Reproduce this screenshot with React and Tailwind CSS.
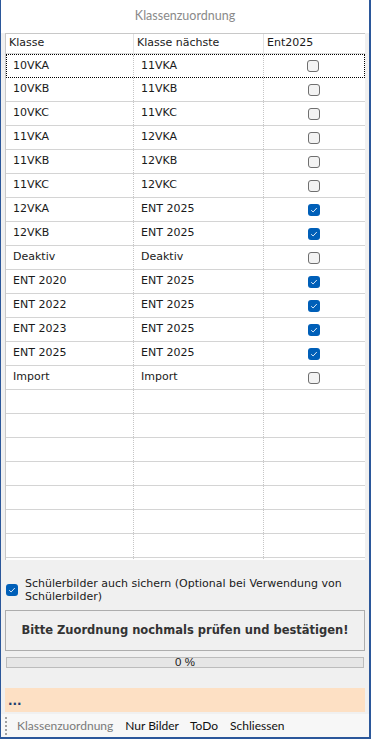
import React from "react";

const rows = [
  ["10VKA", "11VKA", false],
  ["10VKB", "11VKB", false],
  ["10VKC", "11VKC", false],
  ["11VKA", "12VKA", false],
  ["11VKB", "12VKB", false],
  ["11VKC", "12VKC", false],
  ["12VKA", "ENT 2025", true],
  ["12VKB", "ENT 2025", true],
  ["Deaktiv", "Deaktiv", false],
  ["ENT 2020", "ENT 2025", true],
  ["ENT 2022", "ENT 2025", true],
  ["ENT 2023", "ENT 2025", true],
  ["ENT 2025", "ENT 2025", true],
  ["Import", "Import", false],
];

const Check = ({ checked }) =>
  checked ? (
    <span className="w-[12px] h-[12px] rounded-[3px] bg-[#005fb8] flex items-center justify-center">
      <svg width="8" height="8" viewBox="0 0 8 8">
        <path d="M1.2 4.2 L3.1 6 L6.8 2" fill="none" stroke="#d8e6f5" strokeWidth="1" />
      </svg>
    </span>
  ) : (
    <span className="w-[12px] h-[12px] rounded-[3px] border border-[#6f6f6f] bg-[#f3f3f3]" />
  );

const App = () => {
  const empty = Array.from({ length: 8 });
  const grid = "'DejaVu Sans', Verdana, sans-serif";
  const ui = "Lato, 'Open Sans', sans-serif";

  return (
    <div className="w-[371px] h-[739px] bg-[#f0f0f0] border-l border-r-2 border-b-2 border-[#2b579a] flex flex-col overflow-hidden">
      {/* Title */}
      <div
        className="h-[33px] bg-white flex items-center justify-center text-[12.5px] text-[#8a8a8a]"
        style={{ fontFamily: ui }}
      >
        Klassenzuordnung
      </div>

      {/* Grid */}
      <div
        className="mx-[4px] h-[527px] shrink-0 bg-white border-l border-t border-[#c8c8c8] overflow-hidden text-[11px] text-[#1a1a1a]"
        style={{ fontFamily: grid }}
      >
        <div className="h-[20px] flex border-b border-[#d9d9d9]">
          <div className="w-[128px] pl-[3px] flex items-center border-r border-[#e3e3e3]">Klasse</div>
          <div className="w-[130px] pl-[3px] flex items-center border-r border-[#e3e3e3]">Klasse nächste</div>
          <div className="flex-1 pl-[3px] flex items-center">Ent2025</div>
        </div>
        {rows.map(([a, b, c], i) => (
          <div
            key={i}
            className={`h-[24px] flex ${
              i === 0
                ? "border border-dotted border-black"
                : "border-b border-[#d4d4d4]"
            }`}
          >
            <div className={`${i === 0 ? "w-[127px] pl-[6px]" : "w-[128px] pl-[7px]"} flex items-center border-r border-dotted border-[#c6c6c6]`}>{a}</div>
            <div className="w-[130px] pl-[7px] flex items-center border-r border-dotted border-[#c6c6c6]">{b}</div>
            <div className="flex-1 flex items-center justify-center pr-[2px]">
              <Check checked={c} />
            </div>
          </div>
        ))}
        {empty.map((_, i) => (
          <div key={i} className="h-[24px] flex border-b border-[#d4d4d4]">
            <div className="w-[128px] border-r border-dotted border-[#c6c6c6]" />
            <div className="w-[130px] border-r border-dotted border-[#c6c6c6]" />
            <div className="flex-1" />
          </div>
        ))}
      </div>

      {/* Option */}
      <div
        className="mt-[17px] ml-[5px] flex items-center gap-[7px] text-[11px] leading-[13px] text-[#1a1a1a]"
        style={{ fontFamily: grid }}
      >
        <Check checked />
        <span>
          Schülerbilder auch sichern (Optional bei Verwendung von
          <br />
          Schülerbilder)
        </span>
      </div>

      {/* Button */}
      <button
        className="mt-[7px] mx-[4px] h-[41px] shrink-0 border border-[#adadad] bg-[#f0f0f0] font-bold text-[11.5px] text-[#333]"
        style={{ fontFamily: grid }}
      >
        Bitte Zuordnung nochmals prüfen und bestätigen!
      </button>

      {/* Progress */}
      <div
        className="mt-[6px] mx-[5px] h-[11px] shrink-0 border border-[#bcbcbc] bg-[#e6e6e6] flex items-center justify-center text-[11.5px] leading-none text-[#1a1a1a]"
        style={{ fontFamily: "'Liberation Sans', Arial, sans-serif" }}
      >
        0 %
      </div>

      {/* Status */}
      <div
        className="mt-[20px] mx-[4px] h-[24px] shrink-0 bg-[#fde0c4] flex items-end pl-[3px] pb-[5px] text-[12px] leading-none text-[#1f3c6e] font-bold"
        style={{ fontFamily: grid }}
      >
        ...
      </div>

      {/* Menu */}
      <div
        className="mt-[2px] flex-1 bg-[#f7f7f7] flex items-center text-[12px] text-[#111]"
        style={{ fontFamily: ui }}
      >
        <div className="ml-[4px] w-[2px] h-[18px] flex flex-col justify-between">
          {[0, 1, 2, 3, 4].map((i) => (
            <span key={i} className="w-[2px] h-[2px] bg-[#a0a0a0]" />
          ))}
        </div>
        <span className="ml-[10px] text-[#7a7a7a]">Klassenzuordnung</span>
        <span className="ml-[12px]">Nur Bilder</span>
        <span className="ml-[11px]">ToDo</span>
        <span className="ml-[12px]">Schliessen</span>
      </div>
    </div>
  );
};

export default App;
